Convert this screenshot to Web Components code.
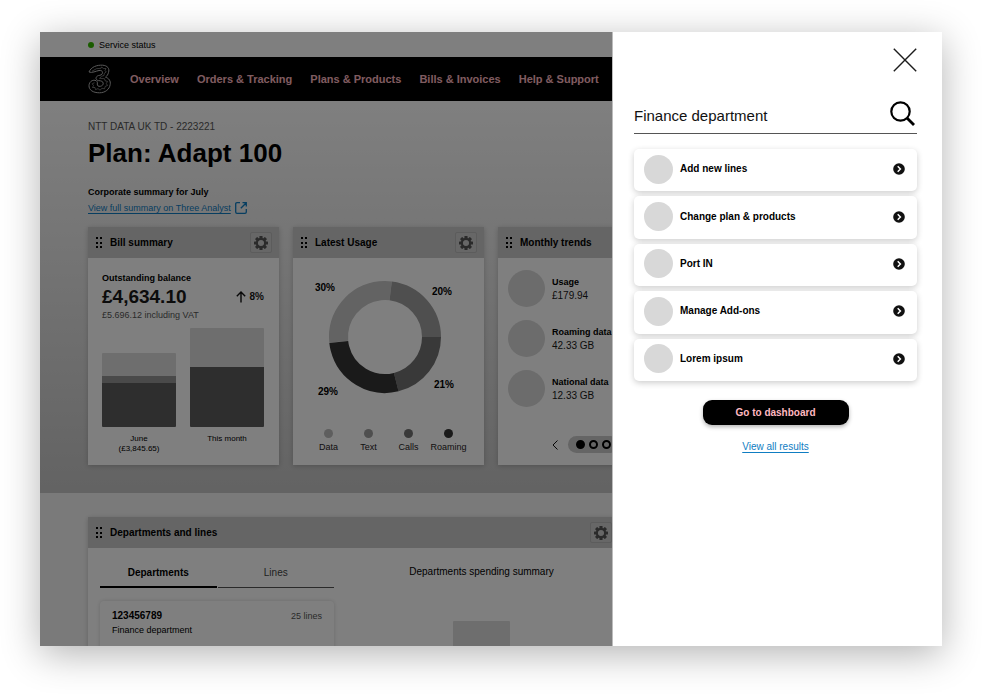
<!DOCTYPE html>
<html lang="en">
<head>
<meta charset="utf-8">
<title>Plan: Adapt 100</title>
<style>
  body { margin: 0; background: #fff; font-family: "Liberation Sans", Arial, sans-serif; font-size: 10px; line-height: 12px; color: #000; }
</style>
</head>
<body>
<app-window>
  <status-bar>Service status</status-bar>
  <main-nav></main-nav>
  <plan-hero>
    <widget-card heading="Bill summary"><bill-summary></bill-summary></widget-card>
    <widget-card heading="Latest Usage"><usage-donut></usage-donut></widget-card>
    <widget-card heading="Monthly trends">
      <trend-list>
        <trend-item label="Usage">£179.94</trend-item>
        <trend-item label="Roaming data">42.33 GB</trend-item>
        <trend-item label="National data">12.33 GB</trend-item>
      </trend-list>
    </widget-card>
  </plan-hero>
  <lower-section>
    <widget-card heading="Departments and lines"><department-panel></department-panel></widget-card>
  </lower-section>
  <search-drawer slot="drawer">
    <result-item>Add new lines</result-item>
    <result-item>Change plan &amp; products</result-item>
    <result-item>Port IN</result-item>
    <result-item>Manage Add-ons</result-item>
    <result-item>Lorem ipsum</result-item>
  </search-drawer>
</app-window>

<script>
const reset = `
  *, *::before, *::after { box-sizing: border-box; }
  :host { display: block; box-sizing: border-box; }
  button, input { font: inherit; color: inherit; margin: 0; padding: 0; border: 0; background: none; }
  h1, h2, p, ul { margin: 0; padding: 0; font-size: inherit; font-weight: inherit; }
  ul { list-style: none; }
  svg { display: block; }
`;

function define(name, render) {
  customElements.define(name, class extends HTMLElement {
    constructor() {
      super();
      this.attachShadow({ mode: 'open' });
    }
    connectedCallback() {
      const { css, html } = render(this);
      this.shadowRoot.innerHTML = `<style>${reset}${css}</style>${html}`;
    }
  });
}

const gearTeeth = [0, 45, 90, 135, 180, 225, 270, 315]
  .map(a => `<rect x="6.2" y="0" width="3.6" height="4" rx=".6" transform="rotate(${a} 8 8)"/>`).join('');

const icons = {
  gear: `<svg width="14" height="14" viewBox="0 0 16 16" fill="#555">${gearTeeth}<circle cx="8" cy="8" r="4.7" fill="none" stroke="#555" stroke-width="2.4"/></svg>`,
  grip: `<svg width="6" height="12" viewBox="0 0 6 12"><g fill="#000"><rect x="0" y="0" width="2" height="2"/><rect x="4" y="0" width="2" height="2"/><rect x="0" y="5" width="2" height="2"/><rect x="4" y="5" width="2" height="2"/><rect x="0" y="9" width="2" height="2"/><rect x="4" y="9" width="2" height="2"/></g></svg>`,
  external: `<svg width="12" height="12" viewBox="0 0 12 12" fill="none" stroke="#0f7dc2" stroke-width="1.3"><path d="M5 .7H2Q.7.7.7 2v8q0 1.3 1.3 1.3h8q1.3 0 1.3-1.3V7M7.5.7h3.8v3.8M11.3.7 5.8 6.2"/></svg>`,
  up: `<svg width="10" height="12" viewBox="0 0 10 12" fill="none" stroke="#111" stroke-width="1.4"><path d="M5 11.5V1M.8 5.2 5 1l4.2 4.2"/></svg>`,
  left: `<svg width="6" height="10" viewBox="0 0 6 10" fill="none" stroke="#111"><path d="M5.5.5 1 5l4.5 4.5"/></svg>`,
  right: `<svg width="6" height="10" viewBox="0 0 6 10" fill="none" stroke="#111"><path d="M.5.5 5 5 .5 9.5"/></svg>`,
  close: `<svg width="24" height="24" viewBox="0 0 24 24" fill="none" stroke="#1c1c1c" stroke-width="1.4"><path d="M.8.8l22.4 22.4M23.2.8.8 23.2"/></svg>`,
  search: `<svg width="25" height="25" viewBox="0 0 25 25" fill="none" stroke="#000" stroke-width="2.2"><circle cx="10.5" cy="10.5" r="9.2"/><path d="m17 17 7 7" stroke-width="2.8"/></svg>`,
  go: `<svg width="12" height="12" viewBox="0 0 12 12"><circle cx="6" cy="6" r="5.8" fill="#111"/><path d="M4.7 3.3 7.4 6 4.7 8.7" fill="none" stroke="#fff" stroke-width="1.5"/></svg>`,
  logo: `<svg width="24" height="30" viewBox="0 0 24 30" fill="none" stroke="#b4b4b4" stroke-linejoin="round"><path d="M1 8C3 3 9 .8 14.5 1.200 19.500 1.500 21.800 4.500 20.500 8.500 20 10.500 19 12 17.500 13.200 21 14.200 22.800 17 22.200 20.500 21.500 25.500 17 28.800 11.500 28.800 5 28.800.8 26 1 21.500 1.200 18 4 15.800 7 16.300 9 16.700 9.800 18.300 9.300 20 9 21.800 10.500 22.600 12.300 22.300 14.200 22 15.300 20.700 15.200 19.200 15 17.500 13.500 16.800 10.500 16.600 8.500 16.300 7.600 15 8.200 13.500 8.600 12.200 10 11.500 11.800 11.300 13.600 11 14.600 9.800 14.500 8.300 14.300 6.800 13 6.200 11 6.500 8 7 4 9.300 1 8Z"/><path stroke-width=".6" d="M4 7.200 8.500 4.700 13 4.300 13.500 3 15.700 4.600 18 4.500 17 6.700 18.300 8 16.300 9.300 16 11.500 13.700 12.200 11.500 14.300 14 14.500 16.500 14.700 17 16.700 19.500 17.500 18.300 19.500 19.500 21.500 17.200 22.400 16.500 24.800 14 24.300 12 26.200 10 24.600 7.500 25.600 7 23.500 4.500 23.500 5.500 21.500 4.200 19.800 6.500 18.700"/></svg>`
};

define('ui-icon', el => ({
  css: ':host { flex: none; }',
  html: icons[el.getAttribute('name')]
}));

define('app-window', () => ({
  css: `
    :host { padding: 32px 40px 48px; }
    .frame { position: relative; height: calc(100vh - 80px); overflow: hidden; background: #f5f5f5; }
    .glow { box-shadow: 0 8px 36px rgba(0, 0, 0, .3); }
    .backdrop { position: absolute; inset: 0; background: rgba(0, 0, 0, .5); }
    ::slotted([slot="drawer"]) { position: absolute; top: 0; right: 0; bottom: 0; width: 330px; }
  `,
  html: `<div class="glow"><div class="frame"><slot></slot><div class="backdrop"></div><slot name="drawer"></slot></div></div>`
}));

define('status-bar', () => ({
  css: `
    :host { display: flex; align-items: center; gap: 5px; height: 25px; padding: 0 48px; background: #fff; font-size: 9px; }
    i { width: 6px; height: 6px; border-radius: 50%; background: #35b800; }
  `,
  html: `<i></i><span><slot></slot></span>`
}));

define('main-nav', () => ({
  css: `
    :host { background: #000; }
    nav { display: flex; align-items: center; height: 44px; padding: 0 48px; }
    ul { display: flex; gap: 18px; margin-left: 18px; }
    a { color: #ffb9c0; font-size: 11px; font-weight: bold; text-decoration: none; white-space: nowrap; }
  `,
  html: `<nav aria-label="Main"><ui-icon name="logo"></ui-icon><ul>${
    ['Overview', 'Orders &amp; Tracking', 'Plans &amp; Products', 'Bills &amp; Invoices', 'Help &amp; Support']
      .map(t => `<li><a href="#">${t}</a></li>`).join('')}</ul></nav>`
}));

define('plan-hero', () => ({
  css: `
    :host { padding: 20px 48px 28px; background: linear-gradient(#fff, #c6c6c6); }
    .account { color: #555; font-size: 10px; line-height: 12px; }
    h1 { font-size: 26px; line-height: 32px; font-weight: bold; margin-top: 4px; }
    .summary { font-size: 9px; line-height: 12px; font-weight: bold; margin-top: 17px; }
    .link { display: flex; align-items: center; gap: 4px; margin-top: 4px; }
    a { color: #0f7dc2; font-size: 9px; line-height: 12px; text-underline-offset: 2px; }
    .grid { display: grid; grid-template-columns: repeat(4, minmax(0, 1fr)); gap: 14px; margin-top: 13px; }
  `,
  html: `
    <p class="account">NTT DATA UK TD - 2223221</p>
    <h1>Plan: Adapt 100</h1>
    <p class="summary">Corporate summary for July</p>
    <div class="link"><a href="#">View full summary on Three Analyst</a><ui-icon name="external"></ui-icon></div>
    <div class="grid"><slot></slot></div>`
}));

define('lower-section', () => ({
  css: `:host { display: grid; grid-template-columns: minmax(0, 1fr) 261px; gap: 14px; padding: 24px 48px; }`,
  html: `<slot></slot>`
}));

define('widget-card', el => ({
  css: `
    :host { display: flex; flex-direction: column; background: #fff; box-shadow: 0 1px 5px rgba(0, 0, 0, .2); }
    header { display: flex; align-items: center; height: 31px; padding: 0 7px 0 8px; background: #cacaca; }
    h2 { flex: 1; margin-left: 8px; font-size: 10px; font-weight: bold; }
    button { display: grid; place-items: center; width: 22px; height: 21px; border: 1px solid #b8b8b8; border-radius: 2px; background: #cfcfcf; }
    .body { flex: 1; }
  `,
  html: `
    <header><ui-icon name="grip"></ui-icon><h2>${el.getAttribute('heading')}</h2>
      <button type="button" aria-label="Settings"><ui-icon name="gear"></ui-icon></button></header>
    <div class="body"><slot></slot></div>`
}));

define('bill-summary', () => ({
  css: `
    :host { padding: 14px 15px 10px 14px; }
    .label { font-size: 9px; font-weight: bold; }
    .row { display: flex; align-items: center; justify-content: space-between; }
    .price { font-size: 19px; line-height: 25px; font-weight: bold; color: #181818; }
    .change { display: flex; align-items: center; gap: 4px; font-weight: bold; color: #181818; }
    .vat { font-size: 9px; color: #555; }
    .bars { display: grid; grid-template-columns: 1fr 1fr; gap: 14px; height: 99px; margin-top: 7px; align-items: end; }
    .bar { border-radius: 1px; overflow: hidden; }
    .a { background: #dcdcdc; } .b { background: #949494; } .c { background: #5c5c5c; }
    .names { display: grid; grid-template-columns: 1fr 1fr; gap: 14px; margin-top: 7px; text-align: center; font-size: 8px; line-height: 10px; }
  `,
  html: `
    <p class="label">Outstanding balance</p>
    <div class="row"><span class="price">£4,634.10</span><span class="change"><ui-icon name="up"></ui-icon>8%</span></div>
    <p class="vat">£5.696.12 including VAT</p>
    <div class="bars">
      <div class="bar"><div class="a" style="height:23px"></div><div class="b" style="height:7px"></div><div class="c" style="height:44px"></div></div>
      <div class="bar"><div class="a" style="height:39px"></div><div class="c" style="height:60px"></div></div>
    </div>
    <div class="names"><span>June<br>(£3,845.65)</span><span>This month</span></div>`
}));

const ringSegment = (start, end, color) =>
  `<circle cx="92" cy="79" r="46.5" stroke="${color}" pathLength="360" stroke-dasharray="${end - start} ${360 - end + start}" transform="rotate(${start - 90} 92 79)"/>`;

define('usage-donut', () => ({
  css: `
    .chart { width: 100%; height: auto; }
    text { font-size: 10px; font-weight: bold; }
    ul { display: grid; grid-template-columns: repeat(4, 40px); justify-content: center; font-size: 9px; color: #1f2224; text-align: center; margin-top: 21px; }
    i { display: block; width: 9px; height: 9px; margin: 0 auto 3px; border-radius: 50%; }
  `,
  html: `
    <svg class="chart" viewBox="0 0 191 150" role="img" aria-label="Usage split">
      <g fill="none" stroke-width="19">
        ${ringSegment(264, 367, '#c6c6c6')}${ringSegment(7, 90, '#9e9e9e')}${ringSegment(90, 166, '#727272')}${ringSegment(166, 264, '#343434')}
      </g>
      <text x="22" y="33">30%</text><text x="139" y="37">20%</text><text x="25" y="137">29%</text><text x="141" y="130">21%</text>
    </svg>
    <ul>
      <li><i style="background:#bcbcbc"></i>Data</li>
      <li><i style="background:#9e9e9e"></i>Text</li>
      <li><i style="background:#727272"></i>Calls</li>
      <li><i style="background:#343434"></i>Roaming</li>
    </ul>`
}));

define('trend-list', () => ({
  css: `
    :host { padding: 12px 10px 12px; }
    .items { display: grid; gap: 13px; }
    .pager { display: flex; align-items: center; justify-content: center; gap: 10px; margin-top: 29px; }
    .pager button { display: block; }
    .dots { display: flex; align-items: center; gap: 4px; height: 17px; padding: 0 8px; border-radius: 9px; background: #cacaca; }
    .dots button { width: 9px; height: 9px; border: 2px solid #000; border-radius: 50%; }
    .dots button.on { background: #000; }
  `,
  html: `
    <div class="items"><slot></slot></div>
    <div class="pager">
      <button type="button" aria-label="Previous"><ui-icon name="left"></ui-icon></button>
      <div class="dots"><button class="on" type="button" aria-label="Page 1"></button><button type="button" aria-label="Page 2"></button><button type="button" aria-label="Page 3"></button></div>
      <button type="button" aria-label="Next"><ui-icon name="right"></ui-icon></button>
    </div>`
}));

define('trend-item', el => ({
  css: `
    :host { display: flex; align-items: center; gap: 7px; }
    i { width: 37px; height: 37px; border-radius: 50%; background: #d8d8d8; }
    b { display: block; font-size: 9px; line-height: 14px; }
    span { display: block; font-size: 10px; line-height: 14px; color: #181818; }
  `,
  html: `<i></i><div><b>${el.getAttribute('label')}</b><span><slot></slot></span></div>`
}));

define('department-panel', () => ({
  css: `
    :host { display: grid; grid-template-columns: minmax(0, 234px) minmax(0, 1fr); gap: 10px; padding: 12px 0 0 12px; }
    .tabs { display: grid; grid-template-columns: 1fr 1fr; gap: 1px; }
    .tabs button { height: 28px; padding-bottom: 1px; border-bottom: 1px solid #555; color: #444; }
    .tabs button.on { border-bottom: 2px solid #000; padding-bottom: 0; font-weight: bold; color: #000; }
    .entry { display: grid; grid-template-columns: 1fr auto; row-gap: 2px; margin-top: 13px; padding: 9px 12px 24px; border-radius: 4px; box-shadow: 0 0 4px rgba(0, 0, 0, .16); }
    .entry b { font-size: 10px; }
    .entry span { font-size: 9px; }
    .entry .count { color: #555; }
    .chart { display: flex; flex-direction: column; align-items: center; padding-top: 6px; }
    .bar { width: 57px; height: 120px; margin-top: 43px; border-radius: 1px; background: #dcdcdc; }
  `,
  html: `
    <div>
      <div class="tabs" role="tablist"><button class="on" type="button" role="tab" aria-selected="true">Departments</button><button type="button" role="tab" aria-selected="false">Lines</button></div>
      <div class="entry"><b>123456789</b><span class="count">25 lines</span><span>Finance department</span></div>
    </div>
    <div class="chart"><p>Departments spending summary</p><div class="bar"></div></div>`
}));

define('search-drawer', () => ({
  css: `
    :host { display: flex; flex-direction: column; padding: 16px 25px 16px 21px; background: #fff; border-left: 1px solid #bcbcbc; }
    .close { align-self: flex-end; }
    form { display: flex; align-items: center; height: 38px; margin-top: 24px; border-bottom: 1px solid #555; }
    input { flex: 1; min-width: 0; height: 24px; margin-top: 2px; font-size: 15px; outline: 0; color: #111; }
    form button { margin: 0 2px 2px; }
    .results { display: grid; grid-auto-rows: 1fr; gap: 5px; min-height: 232px; margin-top: 15px; }
    .go { align-self: center; width: 146px; height: 25px; margin-top: 19px; border-radius: 9px; background: #000; color: #ffb9c0; font-weight: bold; box-shadow: 0 2px 4px rgba(0, 0, 0, .3); }
    a { align-self: center; margin-top: 16px; color: #0f7dc2; text-underline-offset: 2px; }
  `,
  html: `
    <button class="close" type="button" aria-label="Close"><ui-icon name="close"></ui-icon></button>
    <form><input type="text" aria-label="Search" value="Finance department"><button type="button" aria-label="Search"><ui-icon name="search"></ui-icon></button></form>
    <div class="results"><slot></slot></div>
    <button class="go" type="button">Go to dashboard</button>
    <a href="#">View all results</a>`
}));

define('result-item', () => ({
  css: `
    :host { display: grid; }
    button { display: flex; align-items: center; gap: 7px; padding: 0 12px 2px 10px; border-radius: 5px; background: #fff; font-weight: bold; text-align: left; box-shadow: 0 2px 6px rgba(0, 0, 0, .2); }
    i { width: 29px; height: 29px; border-radius: 50%; background: #d8d8d8; }
    span { flex: 1; }
  `,
  html: `<button type="button"><i></i><span><slot></slot></span><ui-icon name="go"></ui-icon></button>`
}));
</script>
</body>
</html>
